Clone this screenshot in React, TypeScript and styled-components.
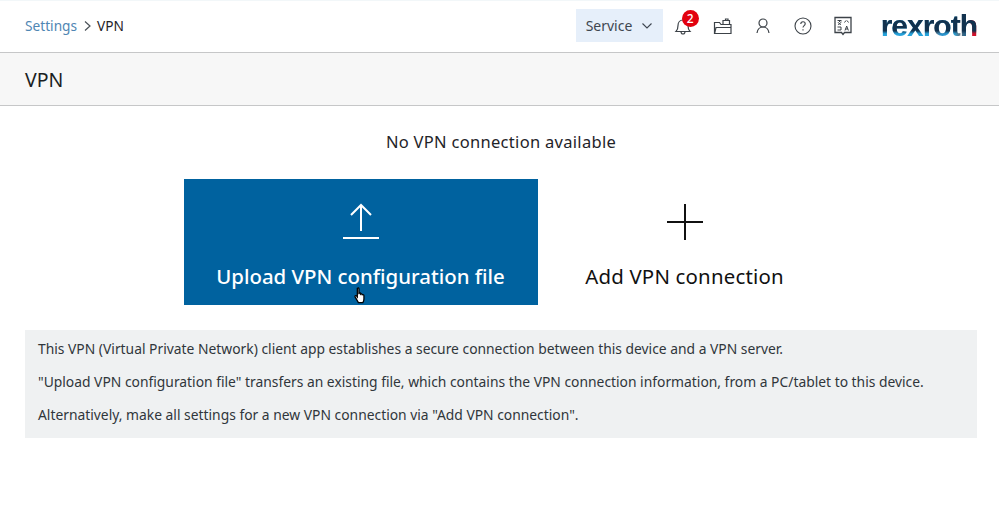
import { createGlobalStyle, styled } from "styled-components";

const GlobalStyle = createGlobalStyle`
  html, body {
    margin: 0;
    background: #fff;
    font-family: "Noto Sans", "Open Sans", sans-serif;
    color: #1f2429;
  }
`;

const Page = styled.div`
  width: 999px;
  height: 505px;
  overflow: hidden;
  border-top: 1px solid #f2f7f9;
  box-sizing: border-box;
`;

const Header = styled.header`
  height: 52px;
  box-sizing: border-box;
  display: flex;
  align-items: center;
  justify-content: space-between;
  padding: 0 22px 2px 25px;
  border-bottom: 1px solid #c6c7c8;
`;

const Breadcrumb = styled.nav`
  display: flex;
  align-items: center;
  font-size: 13.7px;
`;

const Crumb = styled.a`
  color: #4f86b3;
`;

const Toolbar = styled.div`
  display: flex;
  align-items: center;
`;

const ServiceButton = styled.button`
  width: 87px;
  height: 33px;
  border: 0;
  padding: 0 0 0 10px;
  display: flex;
  align-items: center;
  gap: 9px;
  background: #e6effa;
  color: #3e4650;
  font: 14px "Noto Sans", sans-serif;
`;

const IconSlot = styled.span`
  position: relative;
  width: 40px;
  height: 24px;
  display: flex;
  align-items: center;
  justify-content: center;
  color: #3c4248;
`;

const Badge = styled.span`
  position: absolute;
  top: -4px;
  left: 19px;
  width: 17px;
  height: 17px;
  border-radius: 50%;
  background: #e2010f;
  color: #fff;
  font-size: 12px;
  font-weight: 500;
  line-height: 17px;
  text-align: center;
`;

const Logo = styled.span`
  margin-left: 18px;
  font: 700 30px/30px "Liberation Sans", sans-serif;
  letter-spacing: -1px;
  background:
    linear-gradient(180deg, #12324e 0 66%, rgba(18, 50, 78, 0) 76%),
    linear-gradient(90deg, #25a3dc 0 50%, #6d7f8a 56%, #2a8fc8 62%, #25a3dc 76%, #5d7482 82%, #0f5a8a 90%, #d1102a 94%);
  -webkit-background-clip: text;
  background-clip: text;
  color: transparent;
`;

const TitleBar = styled.div`
  height: 53px;
  box-sizing: border-box;
  display: flex;
  align-items: center;
  padding: 0 25px;
  background: #f7f7f7;
  border-bottom: 1px solid #c6c7c8;
  font-size: 19.5px;
  color: #1b1f23;
`;

const Content = styled.main`
  padding: 25px 22px 0 25px;
  display: flex;
  flex-direction: column;
`;

const Message = styled.p`
  margin: 0 0 27px;
  height: 21px;
  line-height: 21px;
  text-align: center;
  font-size: 16.5px;
  letter-spacing: 0.3px;
`;

const Tiles = styled.div`
  display: flex;
  justify-content: center;
  padding-left: 13px;
  margin-bottom: 25px;
`;

const Tile = styled.button<{ $primary?: boolean; $width: number }>`
  position: relative;
  width: ${(p) => p.$width}px;
  height: 126px;
  border: 0;
  padding: 24px 0 0;
  display: flex;
  flex-direction: column;
  align-items: center;
  gap: 22px;
  background: ${(p) => (p.$primary ? "#00629f" : "#fff")};
  color: ${(p) => (p.$primary ? "#fff" : "#111")};
  font: ${(p) => (p.$primary ? 500 : 450)} 20.4px/26px "Noto Sans", sans-serif;
  letter-spacing: ${(p) => (p.$primary ? 0 : 0.2)}px;
`;

const Cursor = styled.svg`
  position: absolute;
  left: 170px;
  top: 108px;
`;

const Info = styled.section`
  background: #eff1f2;
  padding: 9px 13px 0;
  height: 108px;
  box-sizing: border-box;
  font-size: 13.85px;
  color: #30363b;
`;

const InfoLine = styled.p`
  margin: 0 0 13px;
  height: 20px;
  line-height: 20px;
  white-space: nowrap;
`;

const Separator = () => (
  <svg width="20" height="14" viewBox="0 0 20 14" fill="none" stroke="#4a5157" strokeWidth="1.2">
    <path d="M8 2.500l5 4.500-5 4.500" />
  </svg>
);

const Bell = () => (
  <svg width="20" height="20" viewBox="0 0 20 20" fill="none" stroke="currentColor" strokeWidth="1.2">
    <path d="M3 15.500c1.600-1.600 2-3 2-6 0-3.200 2-5.500 5-5.500s5 2.300 5 5.500c0 3 .4 4.400 2 6z" />
    <path d="M8 15.500c0 1.500.8 2.500 2 2.500s2-1 2-2.500" />
  </svg>
);

const Folder = () => (
  <svg width="20" height="20" viewBox="0 0 20 20" fill="none" stroke="currentColor" strokeWidth="1.2">
    <path d="M1.500 17.500V6.500h5l1.500 2h2V4.500h6.500v4h1.500v9z" />
    <path d="M1.500 17.500l1.500-6h15" />
    <path d="M12.500 4.500V3h2.500v1.500M10 8.500h6.500" />
  </svg>
);

const User = () => (
  <svg width="20" height="20" viewBox="0 0 20 20" fill="none" stroke="currentColor" strokeWidth="1.2">
    <circle cx="10" cy="7" r="4" />
    <path d="M4 17c.5-3.500 2.800-6 6-6s5.500 2.500 6 6" />
  </svg>
);

const Help = () => (
  <svg width="20" height="20" viewBox="0 0 20 20" fill="none" stroke="currentColor" strokeWidth="1.1">
    <circle cx="10" cy="10" r="8" />
    <path d="M7.800 8c0-1.400 1-2.200 2.200-2.200s2.200.9 2.200 2c0 1.800-2.200 1.800-2.200 3.700" />
    <path d="M10 13.200v1.300" />
  </svg>
);

const Translate = () => (
  <svg width="20" height="20" viewBox="0 0 20 20" fill="none" stroke="currentColor" strokeWidth="1.300">
    <path d="M2 1.500h16v15h-6.500L10 18.500l-1.500-2H2z" />
    <path d="M4.500 4.500h4M6.500 4.500v1.500M5 8.500c1.500-.5 3-1.500 3-3M5 6c.5 1 1.500 2 3 2.500" strokeWidth="1" />
    <path d="M11.500 6.500l1.500-2M15.500 6.500l-1.500-2M4.500 11h3.500v3H4.500M12 14.500l1.700-4.500 1.700 4.500M12.600 13h2.200" strokeWidth="1" />
  </svg>
);

const Chevron = () => (
  <svg width="12" height="8" viewBox="0 0 12 8" fill="none" stroke="#3e4650" strokeWidth="1.1">
    <path d="M1.500 1.500l4.500 4.500 4.500-4.500" />
  </svg>
);

const UploadIcon = () => (
  <svg width="38" height="38" viewBox="0 0 38 38" fill="none" stroke="currentColor" strokeWidth="2.200">
    <path d="M19 2v26" strokeWidth="2" />
    <path d="M9 12L19 2l10 10" strokeWidth="2" />
    <path d="M1 35h36" />
  </svg>
);

const PlusIcon = () => (
  <svg width="38" height="38" viewBox="0 0 38 38" fill="none" stroke="currentColor" strokeWidth="2">
    <path d="M19 1v36M1 19h36" />
  </svg>
);

const HandCursor = () => (
  <Cursor width="12" height="17" viewBox="0 0 11 16">
    <path
      d="M3 1.200c.7-.7 1.500-.4 1.500.6v5l.2-1c.7-.6 1.400-.3 1.500.4v.6c.7-.5 1.400-.2 1.500.5.800-.3 1.500.1 1.500.9v3c0 1.500-.7 3-1 3.500H4L1 9.500c-.5-1 .3-1.800 1.200-1.200l.8 1z"
      fill="#fff"
      stroke="#000"
      strokeWidth="1.200"
    />
  </Cursor>
);

export default function App() {
  return (
    <Page>
      <GlobalStyle />
      <Header>
        <Breadcrumb>
          <Crumb>Settings</Crumb>
          <Separator />
          <span>VPN</span>
        </Breadcrumb>
        <Toolbar>
          <ServiceButton>
            Service
            <Chevron />
          </ServiceButton>
          <IconSlot>
            <Bell />
            <Badge>2</Badge>
          </IconSlot>
          <IconSlot>
            <Folder />
          </IconSlot>
          <IconSlot>
            <User />
          </IconSlot>
          <IconSlot>
            <Help />
          </IconSlot>
          <IconSlot>
            <Translate />
          </IconSlot>
          <Logo>rexroth</Logo>
        </Toolbar>
      </Header>
      <TitleBar>VPN</TitleBar>
      <Content>
        <Message>No VPN connection available</Message>
        <Tiles>
          <Tile $primary $width={354}>
            <UploadIcon />
            Upload VPN configuration file
            <HandCursor />
          </Tile>
          <Tile $width={294}>
            <PlusIcon />
            Add VPN connection
          </Tile>
        </Tiles>
        <Info>
          <InfoLine>This VPN (Virtual Private Network) client app establishes a secure connection between this device and a VPN server.</InfoLine>
          <InfoLine>"Upload VPN configuration file" transfers an existing file, which contains the VPN connection information, from a PC/tablet to this device.</InfoLine>
          <InfoLine>Alternatively, make all settings for a new VPN connection via "Add VPN connection".</InfoLine>
        </Info>
      </Content>
    </Page>
  );
}
